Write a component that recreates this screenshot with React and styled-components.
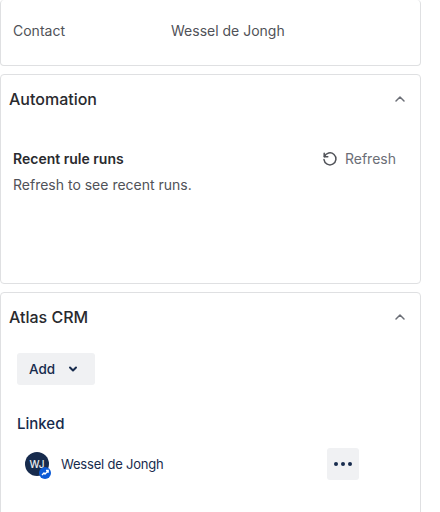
import React from "react";
import styled, { createGlobalStyle } from "styled-components";

const Global = createGlobalStyle`
  html, body { margin: 0; padding: 0; background: #fff; }
  body { font-family: Inter, "Noto Sans", sans-serif; overflow: hidden; height: 512px; }
`;

const Page = styled.div`
  width: 421px;
  height: 512px;
  overflow: hidden;
  display: flex;
  flex-direction: column;
  gap: 8px;
`;

const Card = styled.section`
  box-sizing: border-box;
  flex: none;
  height: ${(p) => p.$height}px;
  border: 1px solid #dfe0e2;
  border-top-width: ${(p) => (p.$open ? 0 : 1)}px;
  border-radius: 4px;
`;

const ContactRow = styled.div`
  display: flex;
  padding: 21px 0 0 12px;
  font-size: 14px;
  line-height: 20px;
  color: #505258;
`;

const ContactLabel = styled.span`
  width: 158px;
  flex: none;
`;

const CardHeader = styled.header`
  display: flex;
  align-items: center;
  justify-content: space-between;
  height: 24px;
  padding: 12px 12px 0 8px;
`;

const CardTitle = styled.h2`
  margin: 0;
  font-size: 16px;
  font-weight: 450;
  line-height: 24px;
  color: #292a2e;
`;

const Toggle = styled.svg`
  width: 16px;
  height: 16px;
  color: #6b6e76;
`;

const RunsHead = styled.div`
  display: flex;
  align-items: center;
  justify-content: space-between;
  padding: 36px 24px 0 12px;
  height: 24px;
`;

const RunsTitle = styled.h3`
  margin: 0;
  font-size: 14px;
  font-weight: 600;
  line-height: 20px;
  color: #292a2e;
`;

const RefreshButton = styled.button`
  display: flex;
  align-items: center;
  gap: 7px;
  border: 0;
  background: none;
  padding: 0;
  font: inherit;
  font-size: 14px;
  line-height: 20px;
  color: #6b6e76;
`;

const RunsNote = styled.p`
  margin: 4px 0 0 12px;
  font-size: 14px;
  line-height: 20px;
  color: #505258;
`;

const AddButton = styled.button`
  display: flex;
  align-items: center;
  gap: 13px;
  box-sizing: border-box;
  width: 78px;
  height: 32px;
  margin: 24px 0 0 16px;
  padding: 0 12px;
  border: 0;
  border-radius: 3px;
  background: #f0f1f3;
  font: inherit;
  font-size: 13.5px;
  font-weight: 500;
  color: #172b4d;
`;

const SectionLabel = styled.h3`
  margin: 28px 0 0 16px;
  font-size: 15px;
  font-weight: 450;
  line-height: 22px;
  color: #172b4d;
`;

const LinkedRow = styled.div`
  display: flex;
  align-items: center;
  height: 32px;
  margin-top: 13px;
  padding-left: 24px;
`;

const Avatar = styled.div`
  position: relative;
  flex: none;
  display: flex;
  align-items: center;
  justify-content: center;
  width: 24px;
  height: 24px;
  border-radius: 50%;
  background: #172b4d;
  color: #e9ebee;
  font-size: 10px;
  font-weight: 500;
`;

const AvatarBadge = styled.span`
  position: absolute;
  right: -2px;
  bottom: -3px;
  width: 12px;
  height: 12px;
  border-radius: 50%;
  background: #0c5ad6;
  display: flex;
  align-items: center;
  justify-content: center;
`;

const LinkedName = styled.span`
  margin-left: 12px;
  width: 266px;
  flex: none;
  font-size: 13px;
  letter-spacing: -0.2px;
  color: #172b4d;
`;

const MoreButton = styled.button`
  display: flex;
  align-items: center;
  justify-content: center;
  gap: 3px;
  width: 32px;
  height: 32px;
  padding: 0;
  border: 0;
  border-radius: 3px;
  background: #f0f1f3;
`;

const Dot = styled.span`
  width: 4px;
  height: 4px;
  border-radius: 50%;
  background: #172b4d;
`;

const ChevronUp = () => (
  <Toggle viewBox="0 0 16 16" fill="none" stroke="currentColor" strokeWidth="1.5" strokeLinecap="round" strokeLinejoin="round">
    <path d="M4 10l4-4 4 4" />
  </Toggle>
);

export default function App() {
  return (
    <>
      <Global />
      <Page>
        <Card $height={66} $open>
          <ContactRow>
            <ContactLabel>Contact</ContactLabel>
            <span>Wessel de Jongh</span>
          </ContactRow>
        </Card>
        <Card $height={210}>
          <CardHeader>
            <CardTitle>Automation</CardTitle>
            <ChevronUp />
          </CardHeader>
          <RunsHead>
            <RunsTitle>Recent rule runs</RunsTitle>
            <RefreshButton>
              <svg width="16" height="16" viewBox="0 0 16 16" fill="none" stroke="#505258" strokeWidth="1.5" strokeLinecap="round" strokeLinejoin="round">
                <path d="M2.2 2.2v3.6h3.6" />
                <path d="M2.4 5.6A6 6 0 1 1 2 8.6" />
              </svg>
              Refresh
            </RefreshButton>
          </RunsHead>
          <RunsNote>Refresh to see recent runs.</RunsNote>
        </Card>
        <Card $height={240}>
          <CardHeader>
            <CardTitle>Atlas CRM</CardTitle>
            <ChevronUp />
          </CardHeader>
          <AddButton>
            Add
            <svg width="10" height="10" viewBox="0 0 10 10" fill="none" stroke="#172b4d" strokeWidth="2" strokeLinecap="round" strokeLinejoin="round">
              <path d="M2 3.5L5 6.5 8 3.5" />
            </svg>
          </AddButton>
          <SectionLabel>Linked</SectionLabel>
          <LinkedRow>
            <Avatar>
              WJ
              <AvatarBadge>
                <svg width="8" height="8" viewBox="0 0 8 8" fill="none" stroke="#fff" strokeWidth="1.3">
                  <path d="M1 6l2-2 1 1 3-3M5 1.5h2.2v2.2" />
                </svg>
              </AvatarBadge>
            </Avatar>
            <LinkedName>Wessel de Jongh</LinkedName>
            <MoreButton aria-label="More">
              <Dot />
              <Dot />
              <Dot />
            </MoreButton>
          </LinkedRow>
        </Card>
      </Page>
    </>
  );
}
